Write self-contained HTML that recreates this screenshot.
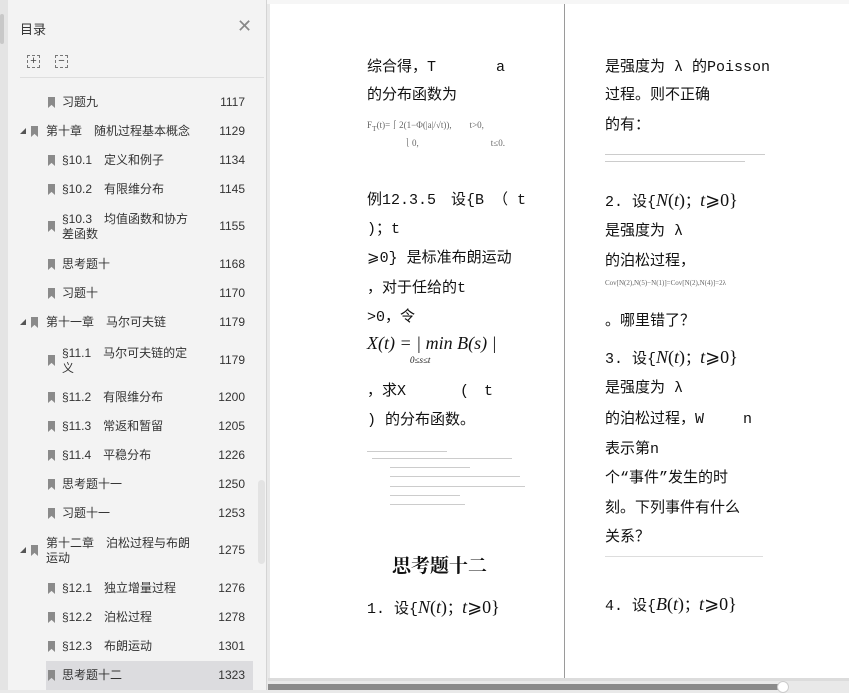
<!DOCTYPE html>
<html><head><meta charset="utf-8"><style>
*{margin:0;padding:0;box-sizing:border-box}
body{width:849px;height:690px;overflow:hidden;background:#e9e9e9;position:relative;font-family:"Liberation Sans","Noto Sans CJK SC",sans-serif}
.abs{position:absolute}
#strip{left:0;top:0;width:8px;height:690px;background:#e4e4e4}
#side{left:8px;top:0;width:259px;height:690px;background:#f3f3f3;border-right:1px solid #d4d4d4}
.bm{position:absolute;width:7px;height:11px;background:#8a8a8a;clip-path:polygon(0 0,100% 0,100% 100%,50% 72%,0 100%)}
.tri{position:absolute;width:0;height:0;border-left:6px solid transparent;border-bottom:6px solid #555}
#page{left:270px;top:4px;width:579px;height:674px;background:#fff}
.t{position:absolute;font-family:"Liberation Mono","Noto Sans CJK SC",monospace;font-size:15px;color:#111;white-space:nowrap}
.m{font-family:"Liberation Serif",serif;font-size:18px}
.tiny{position:absolute;height:1px;background:#ccc}
</style></head><body>
<div class="abs" style="left:0;top:0;width:849px;height:4px;background:#f6f6f6"></div>
<div id="strip" class="abs"></div>
<div class="abs" style="left:0;top:14px;width:4px;height:30px;background:#c8c8c8;border-radius:2px"></div>
<div id="side" class="abs">
 <div class="abs" style="left:12px;top:19px;font-size:13px;color:#333">目录</div>
 <div class="abs" style="left:229px;top:16px;font-size:18px;color:#888;font-weight:300">✕</div>
 <div class="abs" style="left:19px;top:55px;width:13px;height:13px;border:1px dashed #777;font-size:11px;line-height:10px;text-align:center;color:#444">+</div>
 <div class="abs" style="left:47px;top:55px;width:13px;height:13px;border:1px dashed #777;font-size:11px;line-height:10px;text-align:center;color:#444">−</div>
 <div class="abs" style="left:12px;top:77px;width:244px;height:1px;background:#dedede"></div>
 <div class="abs" style="left:250px;top:480px;width:7px;height:84px;background:#e3e3e3;border-radius:4px"></div>
 <div class="abs" style="left:38px;top:661px;width:207px;height:29px;background:#dcdcdf"></div>
</div>
<div id="page" class="abs">
 <div class="abs" style="left:294px;top:0;width:1px;height:674px;background:#9a9a9a"></div>
</div>
<div class="abs" style="left:268px;top:678px;width:581px;height:3px;background:#dcdcdc"></div>
<div class="abs" style="left:268px;top:684px;width:515px;height:6px;background:#8a8a8a"></div>
<div class="abs" style="left:777px;top:681px;width:12px;height:12px;border-radius:6px;background:#fff;border:1px solid #ccc"></div>

<div class="abs" style="left:0;top:0">
<script>
const rows=[
[102,0,'习题九','1117'],[131,1,'第十章　随机过程基本概念','1129'],[160,0,'§10.1　定义和例子','1134'],[189,0,'§10.2　有限维分布','1145'],
[226,0,'§10.3　均值函数和协方<br>差函数','1155'],[264,0,'思考题十','1168'],[293,0,'习题十','1170'],[322,1,'第十一章　马尔可夫链','1179'],
[360,0,'§11.1　马尔可夫链的定<br>义','1179'],[397,0,'§11.2　有限维分布','1200'],[426,0,'§11.3　常返和暂留','1205'],[455,0,'§11.4　平稳分布','1226'],
[484,0,'思考题十一','1250'],[513,0,'习题十一','1253'],[550,1,'第十二章　泊松过程与布朗<br>运动','1275'],[588,0,'§12.1　独立增量过程','1276'],
[617,0,'§12.2　泊松过程','1278'],[646,0,'§12.3　布朗运动','1301'],[675,0,'思考题十二','1323']];
let h='';
for(const [y,ch,t,n] of rows){
 const ix=ch?31:48, tx=ch?46:62;
 if(ch) h+=`<div class="tri" style="left:20px;top:${y-3}px"></div>`;
 h+=`<div class="bm" style="left:${ix}px;top:${y-5}px"></div>`;
 const two=t.includes('<br>');
 h+=`<div class="abs" style="left:${tx}px;top:${y-(two?14:7)}px;font-size:12px;line-height:15px;color:#333;white-space:nowrap">${t}</div>`;
 h+=`<div class="abs" style="left:205px;width:40px;text-align:right;top:${y-7}px;font-size:12px;line-height:15px;color:#333">${n}</div>`;
}
document.write(h);
</script>
</div>

<div class="t" style="left:367px;top:55px">综合得，T　　　　a</div>
<div class="t" style="left:367px;top:83px">的分布函数为</div>
<div class="t" style="left:367px;top:118px;font-size:9px;color:#666;line-height:14px;font-family:'Liberation Serif',serif">F<sub>T</sub>(t)=⎰2(1−Φ(|a|/√t)),　　t&gt;0,<br>　　　　⎱0,　　　　　　　　t≤0.</div>
<div class="t" style="left:367px;top:188px">例12.3.5　设{B （ t</div>
<div class="t" style="left:367px;top:217px">)；t</div>
<div class="t" style="left:367px;top:246px">⩾0} 是标准布朗运动</div>
<div class="t" style="left:367px;top:276px">，对于任给的t</div>
<div class="t" style="left:367px;top:305px">&gt;0，令</div>
<div class="t m" style="left:367px;top:333px;font-style:italic">X(t) = | min B(s) |</div>
<div class="t" style="left:410px;top:355px;font-size:9px;font-style:italic;font-family:'Liberation Serif',serif">0≤s≤t</div>
<div class="t" style="left:367px;top:379px">，求X　　　 (　t</div>
<div class="t" style="left:367px;top:408px">) 的分布函数。</div>
<div class="tiny" style="left:367px;top:451px;width:80px"></div>
<div class="tiny" style="left:372px;top:458px;width:140px"></div>
<div class="tiny" style="left:390px;top:467px;width:80px"></div>
<div class="tiny" style="left:390px;top:476px;width:130px"></div>
<div class="tiny" style="left:390px;top:486px;width:135px"></div>
<div class="tiny" style="left:390px;top:495px;width:70px"></div>
<div class="tiny" style="left:390px;top:504px;width:75px"></div>
<div class="t" style="left:392px;top:551px;font-size:19px;font-weight:bold;font-family:'Liberation Serif','Noto Serif CJK SC',serif">思考题十二</div>
<div class="t" style="left:367px;top:597px">1. 设{<i class="m">N</i><span class="m">(<i>t</i>)</span>；<i class="m">t</i><span class="m">⩾0}</span></div>

<div class="t" style="left:605px;top:55px">是强度为 λ 的Poisson</div>
<div class="t" style="left:605px;top:83px">过程。则不正确</div>
<div class="t" style="left:605px;top:113px">的有：</div>
<div class="tiny" style="left:605px;top:154px;width:160px"></div>
<div class="tiny" style="left:605px;top:161px;width:140px"></div>
<div class="t" style="left:605px;top:190px">2. 设{<i class="m">N</i><span class="m">(<i>t</i>)</span>；<i class="m">t</i><span class="m">⩾0}</span></div>
<div class="t" style="left:605px;top:219px">是强度为 λ</div>
<div class="t" style="left:605px;top:249px">的泊松过程，</div>
<div class="t" style="left:605px;top:279px;font-size:7px;color:#666;font-family:'Liberation Serif',serif">Cov[N(2),N(5)−N(1)]=Cov[N(2),N(4)]=2λ</div>
<div class="t" style="left:605px;top:309px">。哪里错了？</div>
<div class="t" style="left:605px;top:347px">3. 设{<i class="m">N</i><span class="m">(<i>t</i>)</span>；<i class="m">t</i><span class="m">⩾0}</span></div>
<div class="t" style="left:605px;top:376px">是强度为 λ</div>
<div class="t" style="left:605px;top:407px">的泊松过程，W　　 n</div>
<div class="t" style="left:605px;top:437px">表示第n</div>
<div class="t" style="left:605px;top:466px">个“事件”发生的时</div>
<div class="t" style="left:605px;top:496px">刻。下列事件有什么</div>
<div class="t" style="left:605px;top:525px">关系？</div>
<div class="tiny" style="left:605px;top:556px;width:158px;background:#ddd"></div>
<div class="t" style="left:605px;top:594px">4. 设{<i class="m">B</i><span class="m">(<i>t</i>)</span>；<i class="m">t</i><span class="m">⩾0}</span></div>
</body></html>
